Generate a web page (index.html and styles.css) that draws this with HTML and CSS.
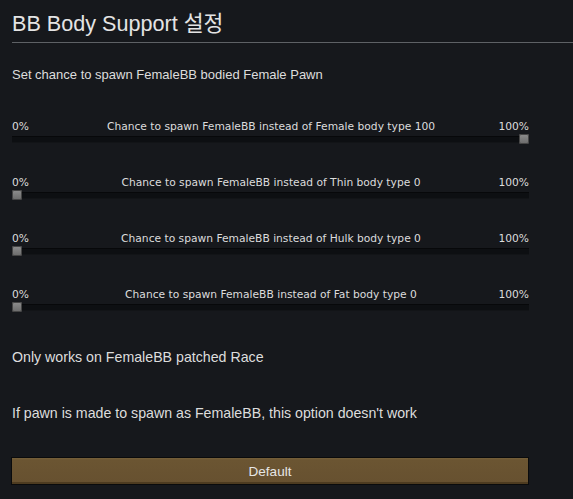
FILE: index.html
```html
<!DOCTYPE html>
<html>
<head>
<meta charset="utf-8">
<link rel="stylesheet" href="styles.css">
</head>
<body>
<div class="page">
  <h1 class="title">BB Body Support 설정</h1>
  <div class="content">
    <p class="intro">Set chance to spawn FemaleBB bodied Female Pawn</p>
    <div class="slider">
      <div class="labels"><span>0%</span><span class="mid">Chance to spawn FemaleBB instead of Female body type 100</span><span class="max">100%</span></div>
      <div class="track"><div class="handle" style="left: 100%"></div></div>
    </div>
    <div class="slider">
      <div class="labels"><span>0%</span><span class="mid">Chance to spawn FemaleBB instead of Thin body type 0</span><span class="max">100%</span></div>
      <div class="track"><div class="handle" style="left: 0%"></div></div>
    </div>
    <div class="slider">
      <div class="labels"><span>0%</span><span class="mid">Chance to spawn FemaleBB instead of Hulk body type 0</span><span class="max">100%</span></div>
      <div class="track"><div class="handle" style="left: 0%"></div></div>
    </div>
    <div class="slider">
      <div class="labels"><span>0%</span><span class="mid">Chance to spawn FemaleBB instead of Fat body type 0</span><span class="max">100%</span></div>
      <div class="track"><div class="handle" style="left: 0%"></div></div>
    </div>
    <p class="note first">Only works on FemaleBB patched Race</p>
    <p class="note second">If pawn is made to spawn as FemaleBB, this option doesn't work</p>
    <button class="btn">Default</button>
  </div>
</div>
</body>
</html>
```

FILE: styles.css
```css
html, body {
  margin: 0;
  padding: 0;
  background: #16181c;
  width: 573px;
  height: 499px;
  overflow: hidden;
}
body {
  font-family: "Liberation Sans", Arial, "Noto Sans CJK KR", sans-serif;
  color: #dddddd;
}
.page {
  padding-left: 12px;
}
.title {
  margin: 11px 0 0 0;
  font-weight: normal;
  font-size: 21.6px;
  line-height: 26px;
  padding-bottom: 5px;
  border-bottom: 1px solid #5e6165;
  color: #e4e4e4;
}
.content {
  width: 517px;
}
.intro {
  margin: 24px 0 0 0;
  font-size: 13px;
  line-height: 16px;
}
.slider {
  margin-top: 38px;
}
.slider + .slider {
  margin-top: 34px;
}
.labels {
  display: grid;
  grid-template-columns: 1fr auto 1fr;
  font-family: "DejaVu Sans", sans-serif;
  font-size: 10.7px;
  line-height: 12px;
  height: 12px;
  color: #dcdcdc;
  white-space: nowrap;
}
.labels .mid {
  text-align: center;
  padding-left: 1px;
}
.labels .max {
  justify-self: end;
}
.track {
  position: relative;
  margin-top: 3px;
  height: 5px;
  background: #0d0f12;
  border-top: 1px solid #07080a;
  border-bottom: 1px solid #121417;
}
.handle {
  position: absolute;
  top: -3px;
  width: 10px;
  height: 10px;
  border-radius: 2px;
  background: linear-gradient(#8e8e8e, #6a6a6a);
  box-shadow: 0 0 0 1px #454545 inset;
}
.handle[style*="100%"] {
  margin-left: -10px;
}
.note {
  font-size: 14.2px;
  line-height: 17px;
  margin: 0;
}
.note.first {
  margin-top: 38px;
}
.note.second {
  margin-top: 39px;
}
.btn {
  display: block;
  margin: 35px 0 0 -1px;
  width: 518px;
  height: 28px;
  padding: 0;
  font-family: "Liberation Sans", Arial, sans-serif;
  font-size: 13.5px;
  color: #e6e6e6;
  background: linear-gradient(#76603a 0, #6b5532 2px, #675130 24px, #4e3c22 28px);
  border: 1px solid #0a0b0c;
  border-radius: 0;
  box-shadow: inset 0 -2px 0 #4d3b20;
}
```
